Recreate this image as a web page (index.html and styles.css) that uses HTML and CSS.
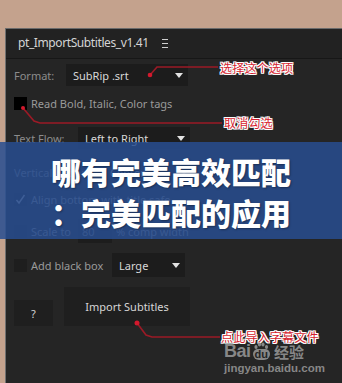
FILE: index.html
```html
<!DOCTYPE html>
<html>
<head>
<meta charset="utf-8">
<link rel="stylesheet" href="styles.css">
</head>
<body>
<div class="page">
  <div class="panel">
    <div class="titlebar">
      <span class="title">pt_ImportSubtitles_v1.41</span>
      <svg class="menu" width="6" height="9" viewBox="0 0 6 9"><rect x="0" y="0" width="6" height="1" fill="#cfcfcf"/><rect x="0" y="4" width="6" height="1" fill="#cfcfcf"/><rect x="0" y="8" width="6" height="1" fill="#cfcfcf"/></svg>
    </div>
    <div class="content">
      <div class="row r-format">
        <span class="label w-format">Format:</span>
        <div class="dropdown dd-format"><span>SubRip .srt</span><i class="arrow"></i></div>
      </div>
      <div class="row r-bold">
        <span class="check black"></span>
        <span class="ctext">Read Bold, Italic, Color tags</span>
      </div>
      <div class="row r-flow">
        <span class="label w-flow">Text Flow:</span>
        <div class="dropdown dd-flow"><span>Left to Right</span><i class="arrow"></i></div>
      </div>
      <div class="row r-vert">
        <span class="label w-vert">Vertical Align:</span>
        <div class="dropdown dd-vert"><span>Center</span><i class="arrow"></i></div>
      </div>
      <div class="row r-align">
        <span class="check"><svg width="13" height="13" viewBox="0 0 13 13"><path d="M2.5 7 L5 10 L10.5 2" fill="none" stroke="#bdbdbd" stroke-width="1.4"/></svg></span>
        <span class="ctext">Align bottom with title safe</span>
      </div>
      <div class="row r-scale">
        <span class="check"></span>
        <span class="ctext w-scale">Scale to</span>
        <span class="input">80</span>
        <span class="ctext">% comp width</span>
      </div>
      <div class="row r-box">
        <span class="check"></span>
        <span class="ctext w-box">Add black box</span>
        <div class="dropdown dd-box"><span>Large</span><i class="arrow"></i></div>
      </div>
      <div class="row r-buttons">
        <div class="btn btn-help">?</div>
        <div class="btn btn-import">Import Subtitles</div>
      </div>
    </div>
  </div>

  <div class="band">
    <div class="headline">哪有完美高效匹配<br>：完美匹配的应用</div>
  </div>

  <svg class="lines" width="342" height="383" viewBox="0 0 342 383">
    <g fill="none" stroke="#9b1a26" stroke-width="1.6">
      <path d="M150 75 L157 67 L218 67"/>
      <path d="M23 108 L34 121 L40 123 L222 123"/>
      <path d="M137 323 L146 335 L152 337 L220 337"/>
    </g>
    <g fill="#d3192d">
      <circle cx="150" cy="75" r="2.3"/>
      <circle cx="23" cy="108" r="2"/>
      <circle cx="137" cy="323" r="2.5"/>
    </g>
  </svg>

  <span class="note n1">选择这个选项</span>
  <span class="note n2">取消勾选</span>
  <span class="note n3">点此导入字幕文件</span>

  <div class="watermark">
    <div class="wm-logo"><span class="wm-bai">Bai</span><span class="wm-du"><svg class="paw" width="16" height="8" viewBox="0 0 16 8"><ellipse cx="3" cy="5" rx="1.6" ry="2" fill="#8d8d8d"/><ellipse cx="6.5" cy="2.5" rx="1.6" ry="2" fill="#8d8d8d"/><ellipse cx="10" cy="2.5" rx="1.6" ry="2" fill="#8d8d8d"/><ellipse cx="13.5" cy="5" rx="1.6" ry="2" fill="#8d8d8d"/></svg><span class="du">du</span></span><span class="wm-jy">经验</span></div>
    <div class="wm-url">jingyan.baidu.com</div>
  </div>
</div>
</body>
</html>
```
FILE: styles.css
```css
* { box-sizing: border-box; }
html, body { margin: 0; padding: 0; }
body {
  width: 342px;
  height: 383px;
  overflow: hidden;
  background: #c4a28d;
  font-family: "Noto Sans", "DejaVu Sans", sans-serif;
}
.page {
  position: relative;
  width: 342px;
  height: 383px;
  padding-top: 28px;
  padding-left: 5px;
}
.panel {
  height: 355px;
  background: #252525;
  border-left: 1px solid #707070;
  border-top: 1px solid #6a6a6a;
}
.titlebar {
  height: 30px;
  background: #222222;
  border-bottom: 1px solid #171717;
  display: flex;
  align-items: center;
  padding-left: 12px;
  padding-bottom: 2px;
}
.title {
  font-size: 12px;
  color: #d4d4d4;
  letter-spacing: -0.4px;
}
.menu { margin-left: 13px; margin-top: 1px; }
.content {
  padding-left: 8px;
  display: flex;
  flex-direction: column;
}
.row {
  display: flex;
  align-items: center;
  font-size: 11px;
}
.label { color: #8c8c8c; }
.ctext { color: #9a9a9a; }
.w-format { width: 52px; }
.w-flow { width: 64px; }
.w-vert { width: 89px; }
.w-scale { width: 47px; }
.w-box { width: 81px; }

.dropdown {
  height: 22px;
  background: #1c1c1c;
  color: #d8d8d8;
  display: flex;
  align-items: center;
  justify-content: space-between;
  padding-left: 7px;
  padding-right: 5px;
}
.arrow {
  width: 0; height: 0;
  border-left: 4.5px solid transparent;
  border-right: 4.5px solid transparent;
  border-top: 5px solid #e2e2e2;
}
.dd-format { width: 122px; }
.dd-flow { width: 112px; }
.dd-vert { width: 90px; }
.dd-box { width: 73px; height: 24px; }

.check {
  width: 13px; height: 13px;
  background: #1e1e1e;
  margin-right: 4px;
  display: inline-flex;
  flex: none;
}
.check.black { background: #000; }

.r-format { margin-top: 5px; height: 22px; }
.r-bold { margin-top: 11px; height: 13px; }
.r-flow { margin-top: 17px; height: 22px; }
.r-vert { margin-top: 12px; height: 22px; }
.r-align { margin-top: 10px; height: 13px; }
.r-scale { margin-top: 13px; height: 24px; }
.r-box { margin-top: 10px; height: 24px; }
.r-buttons { margin-top: 10px; height: 39px; align-items: flex-end; gap: 11px; }

.input {
  width: 34px; height: 24px;
  background: #1d1d1d;
  color: #8a8a8a;
  display: flex; align-items: center;
  padding-left: 4px;
  margin-right: 4px;
}
.btn {
  background: #1f1f1f;
  color: #d6d6d6;
  font-size: 11px;
  display: flex;
  justify-content: center;
}
.btn-help { width: 39px; height: 26px; align-items: center; }
.btn-import { width: 126px; height: 39px; align-items: flex-start; padding-top: 12px; }

.band {
  position: absolute;
  left: 0; top: 142px;
  width: 342px; height: 97px;
  background: rgba(40, 78, 144, 0.85);
  padding-top: 9px;
}
.headline {
  text-align: center;
  color: #fff;
  font-family: "Noto Sans CJK SC", sans-serif;
  font-weight: 900;
  font-size: 30px;
  line-height: 41px;
  text-shadow: 1px 1px 2px rgba(0,0,0,0.35);
}

.lines { position: absolute; left: 0; top: 0; }
.note {
  position: absolute;
  font-family: "Noto Sans CJK SC", sans-serif;
  font-size: 12px;
  line-height: 14px;
  color: #d51d2f;
  text-shadow: 1px 0 #fff, -1px 0 #fff, 0 1px #fff, 0 -1px #fff, 1px 1px #fff, -1px -1px #fff, 1px -1px #fff, -1px 1px #fff;
  letter-spacing: 0.2px;
}
.n1 { left: 220px; top: 61px; }
.n2 { left: 224px; top: 116px; }
.n3 { left: 221px; top: 330px; }

.watermark {
  position: absolute;
  left: 224px; top: 341px;
  color: #8d8d8d;
  opacity: 0.95;
}
.wm-logo { display: flex; align-items: flex-end; height: 19px; }
.wm-bai { font-family: "Liberation Sans", sans-serif; font-weight: bold; font-size: 18px; line-height: 18px; letter-spacing: -0.5px; }
.wm-du { position: relative; display: inline-flex; flex-direction: column; align-items: center; margin: 0 2px; }
.paw { margin-bottom: -1px; }
.du { font-family: "Liberation Sans", sans-serif; font-weight: bold; font-size: 11px; line-height: 10px; color: #252525; background: #8d8d8d; border-radius: 5px 5px 6px 6px; padding: 0 2px 1px; }
.wm-jy { font-family: "Noto Sans CJK SC", sans-serif; font-weight: bold; font-size: 15px; line-height: 17px; margin-left: 2px; }
.wm-url { font-family: "Liberation Sans", sans-serif; font-weight: bold; font-size: 11.5px; line-height: 14px; margin-top: 1px; }
```
